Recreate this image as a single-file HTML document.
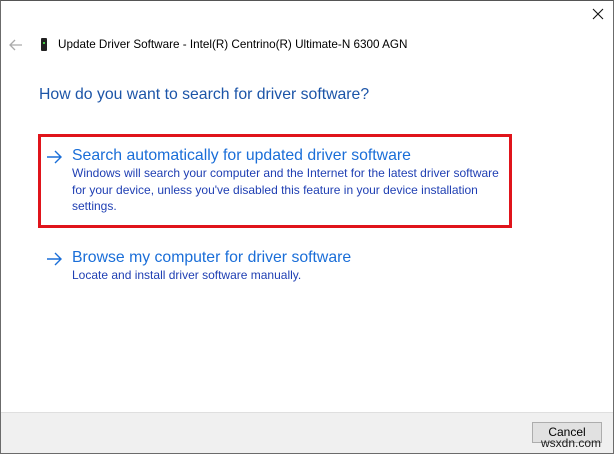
<!DOCTYPE html>
<html><head><meta charset="utf-8"><style>
*{margin:0;padding:0;box-sizing:border-box}
body{width:614px;height:454px;background:#fff;font-family:"Liberation Sans",sans-serif;position:relative;overflow:hidden}
.win{position:absolute;left:0;top:0;width:614px;height:454px;border:1px solid #6b6b6b;border-top-color:#555}
.abs{position:absolute;white-space:nowrap}
.footer{position:absolute;left:1px;right:1px;top:412px;bottom:1px;background:#f0f0f0;border-top:1px solid #dfdfdf}
.btn{position:absolute;left:532px;top:422px;width:70px;height:21px;background:#e1e1e1;border:1px solid #adadad;font-size:12px;text-align:center;line-height:19px;color:#000}
.link{color:#1a6ed8;font-size:15.8px}
.desc{color:#1f3fb3;font-size:12px;line-height:16.5px}
</style></head><body>
<div class="win"></div>
<svg class="abs" style="left:592px;top:8px" width="12" height="12"><path d="M1 1L11 11M11 1L1 11" stroke="#111" stroke-width="1.1"/></svg>
<svg class="abs" style="left:9px;top:39px" width="14" height="12"><path d="M1 6H13M6 1L1 6L6 11" stroke="#aaa" stroke-width="1.3" fill="none"/></svg>
<div class="abs" style="left:41px;top:38px;width:6px;height:13px;background:#222;border-radius:1px"></div>
<div class="abs" style="left:43px;top:42px;width:2px;height:2px;background:#4c4"></div>
<div class="abs" style="left:58px;top:38px;font-size:11.7px;color:#000">Update Driver Software - Intel(R) Centrino(R) Ultimate-N 6300 AGN</div>
<div class="abs" style="left:39px;top:86px;font-size:15.8px;color:#1c55a8">How do you want to search for driver software?</div>
<div class="abs" style="left:38px;top:134px;width:474px;height:94px;border:3px solid #e0141b"></div>
<svg class="abs" style="left:46px;top:150px" width="17" height="14"><path d="M1 7H15M9 1L15 7L9 13" stroke="#1a6ed8" stroke-width="1.4" fill="none"/></svg>
<div class="abs link" style="left:72px;top:147px">Search automatically for updated driver software</div>
<div class="abs desc" style="left:72px;top:165px">Windows will search your computer and the Internet for the latest driver software<br>for your device, unless you've disabled this feature in your device installation<br>settings.</div>
<svg class="abs" style="left:46px;top:252px" width="17" height="14"><path d="M1 7H15M9 1L15 7L9 13" stroke="#1a6ed8" stroke-width="1.4" fill="none"/></svg>
<div class="abs link" style="left:72px;top:249px">Browse my computer for driver software</div>
<div class="abs desc" style="left:72px;top:267px">Locate and install driver software manually.</div>
<div class="footer"></div>
<div class="btn">Cancel</div>
<div class="abs" style="left:541px;top:436px;font-size:12px;color:#222">wsxdn.com</div>
</body></html>
